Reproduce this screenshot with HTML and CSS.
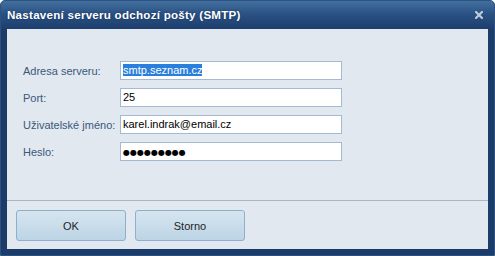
FILE: index.html
```html
<!DOCTYPE html>
<html lang="cs">
<head>
    <meta charset="UTF-8">
    <title>Nastavení serveru odchozí pošty (SMTP)</title>
    <link rel="stylesheet" href="styles.css">
</head>
<body>
    <div class="window">
        <div class="titlebar">
            <span class="title">Nastavení serveru odchozí pošty (SMTP)</span>
            <span class="close">
                <svg width="8" height="8" viewBox="0 0 8 8">
                    <path d="M1 1 L7 7 M7 1 L1 7" stroke="#bccbdd" stroke-width="2.2" stroke-linecap="square"/>
                </svg>
            </span>
        </div>
        <div class="client">
            <div class="form">
                <label>Adresa serveru:</label>
                <div class="field"><span class="selected">smtp.seznam.cz</span></div>
                <label>Port:</label>
                <div class="field">25</div>
                <label>Uživatelské jméno:</label>
                <div class="field">karel.indrak@email.cz</div>
                <label>Heslo:</label>
                <div class="field"><span class="dots">●●●●●●●●●</span></div>
            </div>
            <div class="footer">
                <button type="button">OK</button>
                <button type="button">Storno</button>
            </div>
        </div>
    </div>
</body>
</html>
```

FILE: styles.css
```css
body {
    margin: 0;
    font-family: 'Liberation Sans', Arial, sans-serif;
    font-size: 11px;
}
.window {
    width: 495px;
    height: 256px;
    box-sizing: border-box;
    background-color: #1b3c69;
    border: 1px solid #2d5282;
    border-radius: 5px 5px 0 0;
    display: flex;
    flex-direction: column;
}
.titlebar {
    height: 27px;
    display: flex;
    align-items: center;
    justify-content: space-between;
    padding: 0 11px 1px 6px;
    background: linear-gradient(#42709f 0%, #2b5284 45%, #1c3e6d 100%);
    border-radius: 4px 4px 0 0;
}
.title {
    color: #fff;
    font-weight: bold;
    font-size: 11.6px;
    letter-spacing: 0.25px;
    text-shadow: 0 0 2px #14305a;
}
.close {
    display: flex;
}
.client {
    flex: 1;
    margin: 0 6px 6px 6px;
    background-color: #e1e8f0;
    display: flex;
    flex-direction: column;
}
.form {
    flex: 1;
    display: grid;
    grid-template-columns: 97px 222px;
    grid-auto-rows: 19px;
    row-gap: 8px;
    align-items: center;
    padding: 32px 0 0 16px;
}
label {
    color: #3b5878;
}
.field {
    height: 19px;
    box-sizing: border-box;
    background-color: #fff;
    border: 1px solid #a3bad2;
    padding: 0 2px;
    line-height: 17px;
    color: #000;
    white-space: nowrap;
}
.selected {
    background-color: #2a7fdc;
    color: #fff;
}
.dots {
    font-family: 'DejaVu Sans', sans-serif;
    font-size: 8px;
}
.footer {
    height: 49px;
    border-top: 1px solid #a8b5c5;
    display: flex;
    gap: 9px;
    padding: 9px 0 0 9px;
    box-sizing: border-box;
}
button {
    width: 110px;
    height: 31px;
    font-family: inherit;
    font-size: 11px;
    color: #1e1e1e;
    background: linear-gradient(#d6e5f0, #bcd4e5);
    border: 1px solid #8db0cd;
    border-radius: 3px;
}
```
